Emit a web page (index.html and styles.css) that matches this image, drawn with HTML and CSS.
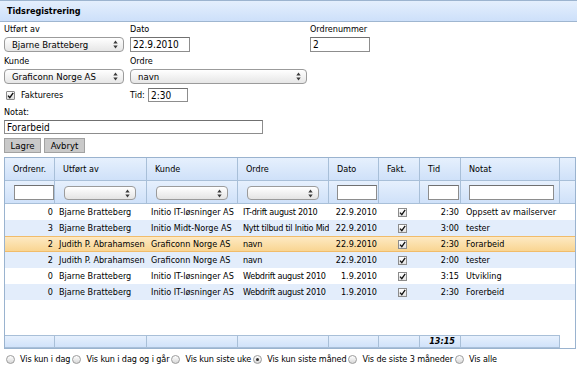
FILE: index.html
```html
<!DOCTYPE html>
<html>
<head>
<meta charset="utf-8">
<link rel="stylesheet" href="styles.css">
</head>
<body>
<div class="titlebar">Tidsregistrering</div>
<div class="form">
  <div class="frow">
    <div class="c1">
      <div class="lbl l1">Utført av</div>
      <div class="sel w120"><span>Bjarne Bratteberg</span><svg class="arr" width="5" height="9" viewBox="0 0 5 9"><path d="M0.3 3.6 L2.5 0.6 L4.7 3.6Z M0.3 5.4 L2.5 8.4 L4.7 5.4Z" fill="#3a3a3a"/></svg></div>
    </div>
    <div class="c2">
      <div class="lbl l1">Dato</div>
      <input class="inp w60" value="22.9.2010">
    </div>
    <div class="c3">
      <div class="lbl l1">Ordrenummer</div>
      <input class="inp w60" value="2">
    </div>
  </div>
  <div class="frow">
    <div class="c1">
      <div class="lbl l2">Kunde</div>
      <div class="sel w120"><span>Graficonn Norge AS</span><svg class="arr" width="5" height="9" viewBox="0 0 5 9"><path d="M0.3 3.6 L2.5 0.6 L4.7 3.6Z M0.3 5.4 L2.5 8.4 L4.7 5.4Z" fill="#3a3a3a"/></svg></div>
    </div>
    <div class="c2">
      <div class="lbl l2">Ordre</div>
      <div class="sel w176"><span>navn</span><svg class="arr" width="5" height="9" viewBox="0 0 5 9"><path d="M0.3 3.6 L2.5 0.6 L4.7 3.6Z M0.3 5.4 L2.5 8.4 L4.7 5.4Z" fill="#3a3a3a"/></svg></div>
    </div>
  </div>
  <div class="frow r3">
    <div class="c1 fak">
      <span class="cb"><svg width="7" height="7" viewBox="0 0 7 7"><path d="M1 3.6 L2.8 5.6 L6.2 0.8" fill="none" stroke="#111" stroke-width="1.4"/></svg></span>
      <span>Faktureres</span>
    </div>
    <div class="c2 tid">
      <span class="tidl">Tid:</span>
      <input class="inp w40" value="2:30">
    </div>
  </div>
  <div class="lbl l3">Notat:</div>
  <input class="inp w259" value="Forarbeid">
  <div class="btns">
    <div class="btn b1">Lagre</div>
    <div class="btn b2">Avbryt</div>
  </div>
</div>

<div class="grid">
  <div class="gcols ghead">
    <div class="hc">Ordrenr.</div>
    <div class="hc">Utført av</div>
    <div class="hc">Kunde</div>
    <div class="hc">Ordre</div>
    <div class="hc">Dato</div>
    <div class="hc">Fakt.</div>
    <div class="hc">Tid</div>
    <div class="hc">Notat</div>
    <div class="hc last"></div>
  </div>
  <div class="gcols gfilter">
    <div class="fc"><input class="finp f40"></div>
    <div class="fc"><div class="fsel"><svg class="arr" width="5" height="9" viewBox="0 0 5 9"><path d="M0.3 3.6 L2.5 0.6 L4.7 3.6Z M0.3 5.4 L2.5 8.4 L4.7 5.4Z" fill="#3a3a3a"/></svg></div></div>
    <div class="fc"><div class="fsel"><svg class="arr" width="5" height="9" viewBox="0 0 5 9"><path d="M0.3 3.6 L2.5 0.6 L4.7 3.6Z M0.3 5.4 L2.5 8.4 L4.7 5.4Z" fill="#3a3a3a"/></svg></div></div>
    <div class="fc"><div class="fsel"><svg class="arr" width="5" height="9" viewBox="0 0 5 9"><path d="M0.3 3.6 L2.5 0.6 L4.7 3.6Z M0.3 5.4 L2.5 8.4 L4.7 5.4Z" fill="#3a3a3a"/></svg></div></div>
    <div class="fc fc8"><input class="finp f40"></div>
    <div class="fc"></div>
    <div class="fc fc8"><input class="finp f31"></div>
    <div class="fc fc8"><input class="finp f85"></div>
    <div class="fc last"></div>
  </div>
  <div class="gbody">
    <div class="row">
      <div class="num">0</div><div class="tx">Bjarne Bratteberg</div><div class="tx">Initio IT-løsninger AS</div><div class="tx ord">IT-drift august 2010</div><div class="num">22.9.2010</div><div class="ck"><span class="gcb"><svg width="7" height="7" viewBox="0 0 7 7"><path d="M1 3.6 L2.8 5.6 L6.2 0.8" fill="none" stroke="#111" stroke-width="1.3"/></svg></span></div><div class="num">2:30</div><div class="tx tx5">Oppsett av mailserver</div>
    </div>
    <div class="row alt">
      <div class="num">3</div><div class="tx">Bjarne Bratteberg</div><div class="tx">Initio Midt-Norge AS</div><div class="tx ord">Nytt tilbud til Initio Midt-Norge</div><div class="num">22.9.2010</div><div class="ck"><span class="gcb"><svg width="7" height="7" viewBox="0 0 7 7"><path d="M1 3.6 L2.8 5.6 L6.2 0.8" fill="none" stroke="#111" stroke-width="1.3"/></svg></span></div><div class="num">3:00</div><div class="tx tx5">tester</div>
    </div>
    <div class="row sel-row">
      <div class="num">2</div><div class="tx">Judith P. Abrahamsen</div><div class="tx">Graficonn Norge AS</div><div class="tx ord">navn</div><div class="num">22.9.2010</div><div class="ck"><span class="gcb"><svg width="7" height="7" viewBox="0 0 7 7"><path d="M1 3.6 L2.8 5.6 L6.2 0.8" fill="none" stroke="#111" stroke-width="1.3"/></svg></span></div><div class="num">2:30</div><div class="tx tx5">Forarbeid</div>
    </div>
    <div class="row alt">
      <div class="num">2</div><div class="tx">Judith P. Abrahamsen</div><div class="tx">Graficonn Norge AS</div><div class="tx ord">navn</div><div class="num">22.9.2010</div><div class="ck"><span class="gcb"><svg width="7" height="7" viewBox="0 0 7 7"><path d="M1 3.6 L2.8 5.6 L6.2 0.8" fill="none" stroke="#111" stroke-width="1.3"/></svg></span></div><div class="num">2:00</div><div class="tx tx5">tester</div>
    </div>
    <div class="row">
      <div class="num">0</div><div class="tx">Bjarne Bratteberg</div><div class="tx">Initio IT-løsninger AS</div><div class="tx ord">Webdrift august 2010</div><div class="num">1.9.2010</div><div class="ck"><span class="gcb"><svg width="7" height="7" viewBox="0 0 7 7"><path d="M1 3.6 L2.8 5.6 L6.2 0.8" fill="none" stroke="#111" stroke-width="1.3"/></svg></span></div><div class="num">3:15</div><div class="tx tx5">Utvikling</div>
    </div>
    <div class="row alt">
      <div class="num">0</div><div class="tx">Bjarne Bratteberg</div><div class="tx">Initio IT-løsninger AS</div><div class="tx ord">Webdrift august 2010</div><div class="num">1.9.2010</div><div class="ck"><span class="gcb"><svg width="7" height="7" viewBox="0 0 7 7"><path d="M1 3.6 L2.8 5.6 L6.2 0.8" fill="none" stroke="#111" stroke-width="1.3"/></svg></span></div><div class="num">2:30</div><div class="tx tx5">Forerbeid</div>
    </div>
  </div>
  <div class="gcols gfoot">
    <div class="ftc"></div>
    <div class="ftc"></div>
    <div class="ftc"></div>
    <div class="ftc"></div>
    <div class="ftc"></div>
    <div class="ftc"></div>
    <div class="ftc sum">13:15</div>
    <div class="ftc"></div>
    <div class="ftc empty"></div>
  </div>
</div>

<div class="radios">
  <span class="rb"></span><span class="rt">Vis kun i dag</span>
  <span class="rb"></span><span class="rt">Vis kun i dag og i går</span>
  <span class="rb"></span><span class="rt">Vis kun siste uke</span>
  <span class="rb on"></span><span class="rt">Vis kun siste måned</span>
  <span class="rb"></span><span class="rt">Vis de siste 3 måneder</span>
  <span class="rb"></span><span class="rt">Vis alle</span>
</div>
</body>
</html>
```
FILE: styles.css
```css
* { box-sizing: border-box; }
body {
  margin: 0;
  width: 577px;
  height: 368px;
  overflow: hidden;
  background: #fff;
  color: #000;
  font-family: "DejaVu Sans Condensed", "DejaVu Sans", sans-serif;
  font-stretch: condensed;
  font-size: 9px;
}
.titlebar {
  height: 22px;
  border-top: 1px solid #9cb4cf;
  border-bottom: 1px solid #9fb6d0;
  background: linear-gradient(#e4effd, #cde0fa);
  font-weight: bold;
  padding-left: 7px;
  line-height: 20px;
  font-size: 9px;
}
.form { padding-left: 4px; }
.frow { display: flex; }
.c1 { width: 126px; }
.c2 { width: 180px; }
.c3 { width: 100px; }
.lbl { line-height: 13px; }
.l1 { height: 15px; padding-top: 1px; }
.l2 { height: 17px; padding-top: 3px; }
.l3 { height: 18px; padding-top: 4px; }
.sel {
  height: 15px;
  border: 1px solid #9b9b9b;
  border-radius: 4px;
  background: linear-gradient(#ffffff, #e6e6e6);
  font-size: 9.5px;
  padding: 0 5px 0 7px;
  display: flex;
  align-items: center;
  justify-content: space-between;
}
.w120 { width: 120px; }
.w176 { width: 177px; }
.inp {
  display: block;
  height: 15px;
  border: 1px solid #8d8d8d;
  border-top-color: #707070;
  padding: 0 0 0 2px;
  margin: 0;
  font-family: "DejaVu Sans Condensed", "DejaVu Sans", sans-serif;
  font-stretch: condensed;
  font-size: 10px;
  color: #000;
  background: #fff;
  outline: none;
}
.w60 { width: 60px; }
.w40 { width: 40px; height: 14px; }
.w259 { width: 259px; height: 14px; }
.r3 { margin-top: 4px; height: 14px; align-items: center; }
.fak { display: flex; align-items: center; padding-left: 2px; }
.cb {
  width: 9px;
  height: 9px;
  border: 1px solid #8a8a8a;
  border-radius: 1px;
  background: linear-gradient(#ffffff, #dcdcdc);
  display: flex;
  align-items: center;
  justify-content: center;
  margin-right: 6px;
}
.tid { display: flex; align-items: center; }
.tidl { width: 18px; }
.btns { display: flex; margin-top: 4px; }
.btn {
  height: 15px;
  background: #c9c9c9;
  border: 1px solid #a2a2a2;
  line-height: 13px;
  text-align: center;
  font-size: 9.5px;
  margin-right: 3px;
}
.b1 { width: 37px; }
.b2 { width: 41px; }

.grid {
  margin: 4px 0 0 4px;
  width: 572px;
  height: 192px;
  border: 1px solid #9ab3cf;
  display: flex;
  flex-direction: column;
}
.gcols {
  display: grid;
  grid-template-columns: 50px 92px 91px 91px 50px 41px 41px 99px 15px;
}
.ghead .hc, .gfilter .fc {
  border-right: 1px solid #a8bfd8;
  border-bottom: 1px solid #a8bfd8;
  background: linear-gradient(#e6f0fd, #cfe1f9);
}
.ghead .hc { height: 23px; line-height: 22px; padding-left: 8px; }
.gfilter .fc { height: 23px; padding: 4px 0 0 9px; }
.gfilter .fc8 { padding-left: 8px; }
.hc.last, .fc.last { border-right: none; }
.finp {
  display: block;
  height: 15px;
  border: 1px solid #8d8d8d;
  border-top-color: #707070;
  background: #fff;
  margin: 0;
  padding: 0;
  outline: none;
}
.f40 { width: 40px; }
.f31 { width: 31px; }
.f85 { width: 85px; }
.fsel {
  width: 72px;
  height: 14px;
  margin-top: 1px;
  border: 1px solid #9b9b9b;
  border-radius: 4px;
  background: linear-gradient(#ffffff, #e4e4e4);
  display: flex;
  align-items: center;
  justify-content: flex-end;
  padding-right: 5px;
}
.gbody { height: 131px; }
.row {
  display: grid;
  grid-template-columns: 50px 92px 91px 91px 50px 41px 41px 102px;
  height: 16px;
  line-height: 16px;
  white-space: nowrap;
}
.row > div { overflow: hidden; }
.alt { background: #e3edfb; }
.sel-row {
  background: linear-gradient(#fde9c3, #f9d592);
  border-top: 1px solid #f1bc6a;
  border-bottom: 1px solid #f1bc6a;
  line-height: 14px;
}
.num { text-align: right; padding-right: 2px; }
.tx { padding-left: 4px; }
.tx5 { padding-left: 5px; }
.ord { padding-left: 5px; letter-spacing: -0.25px; }
.ck { display: flex; align-items: center; padding-left: 19px; }
.gcb {
  width: 9px;
  height: 9px;
  border: 1px solid #8c8c8c;
  background: linear-gradient(#ffffff, #e2e2e2);
  display: flex;
  align-items: center;
  justify-content: center;
}
.gfoot { height: 13px; }
.ftc {
  border-top: 1px solid #a8bfd8;
  border-bottom: 1px solid #a8bfd8;
  border-right: 1px solid #a8bfd8;
  background: linear-gradient(#e6f0fd, #d0e2fa);
  line-height: 11px;
}
.ftc.empty { border: none; background: none; }
.sum { text-align: right; padding-right: 5px; font-weight: bold; font-style: italic; }

.radios {
  display: flex;
  align-items: center;
  height: 20px;
  padding-left: 6px;
  white-space: nowrap;
  letter-spacing: -0.1px;
}
.rb {
  width: 9px;
  height: 9px;
  border-radius: 50%;
  border: 1px solid #9c9c9c;
  background: linear-gradient(#ffffff, #d8d8d8);
  margin-right: 5px;
  flex: none;
  display: flex;
  align-items: center;
  justify-content: center;
}
.rb.on::after {
  content: "";
  width: 3px;
  height: 3px;
  border-radius: 50%;
  background: #333;
}
.rt { margin-right: 2px; }
```
